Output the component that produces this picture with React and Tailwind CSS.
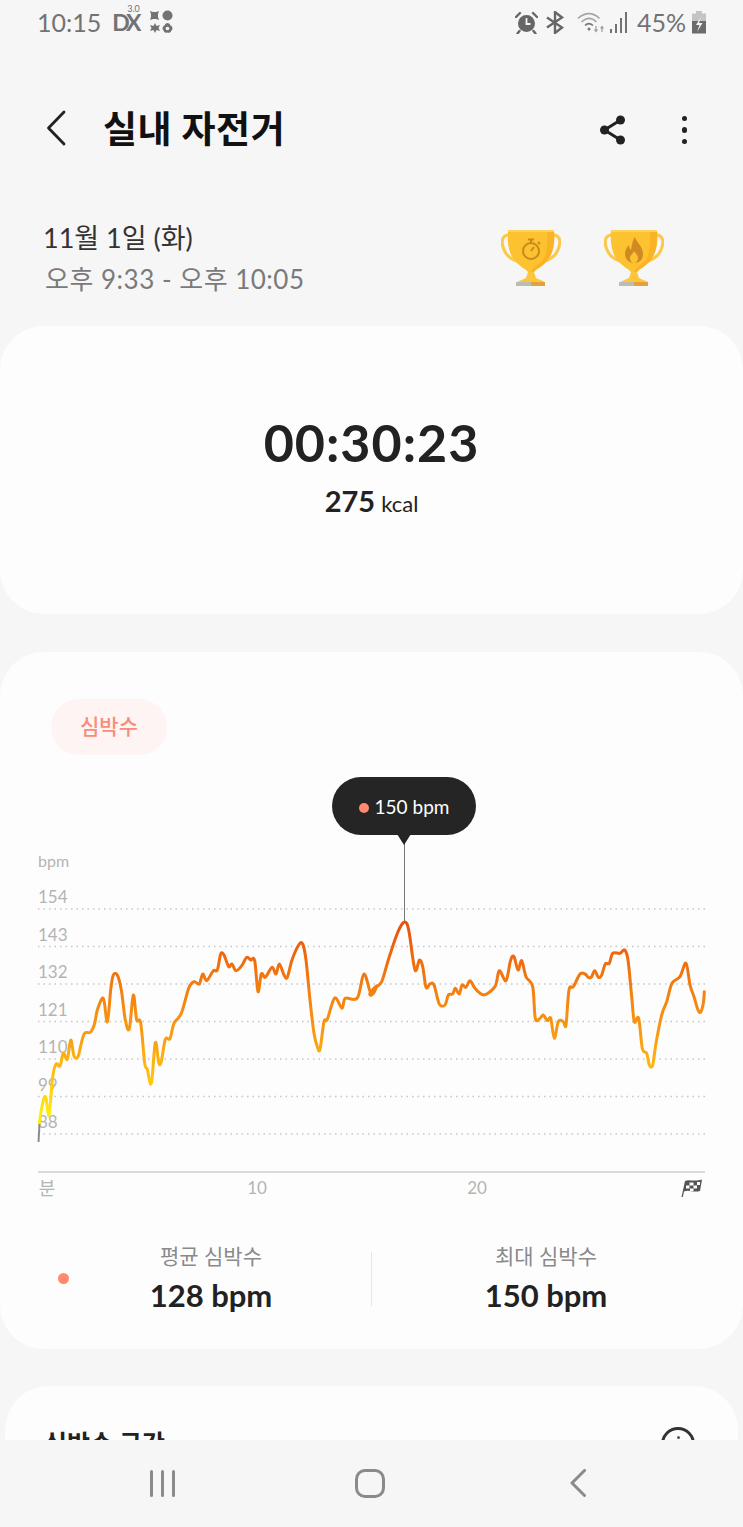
// traced from the chart, left half then right half
const LEFT_TRACE = [
  [118, 850], [124, 810], [132, 775], [138, 775], [146, 828], [152, 780], [158, 710], [168, 672], [180, 678], [190, 640],
  [202, 658], [212, 600], [222, 648], [234, 650], [244, 610], [254, 580], [272, 576], [284, 550], [292, 510], [310, 475],
  [322, 546], [332, 450], [340, 405], [352, 405], [364, 450], [376, 540], [388, 566], [400, 465], [410, 540], [422, 548],
  [434, 670], [442, 688], [454, 730], [466, 608], [476, 668], [484, 665], [496, 598], [510, 596], [522, 550], [544, 520],
  [566, 445], [582, 425], [598, 432], [608, 402], [620, 422], [640, 392], [652, 390], [662, 342], [672, 345], [686, 380],
  [696, 372], [708, 392], [726, 376], [740, 352], [752, 360], [764, 362], [774, 455], [784, 402], [796, 412], [816, 382],
  [828, 402], [838, 372], [852, 405], [862, 412], [876, 360], [896, 315], [908, 312], [918, 360], [930, 480], [942, 580],
  [952, 620], [960, 628], [972, 545], [982, 538], [1004, 474], [1026, 505], [1036, 475], [1072, 474], [1092, 402], [1114, 463],
  [1130, 437],
];
const RIGHT_TRACE = [
  [0, 670], [5, 675], [15, 655], [35, 635], [55, 570], [80, 495], [98, 460], [110, 460], [118, 490], [135, 600],
  [148, 570], [158, 590], [168, 652], [180, 642], [192, 645], [208, 702], [225, 705], [235, 675], [248, 672], [256, 655],
  [268, 672], [276, 645], [288, 652], [300, 632], [315, 655], [335, 673], [350, 672], [376, 648], [388, 602], [408, 632],
  [422, 570], [432, 560], [444, 600], [455, 572], [468, 620], [488, 650], [496, 745], [510, 745], [520, 735], [532, 752],
  [542, 745], [553, 805], [565, 755], [580, 755], [588, 765], [597, 660], [610, 650], [630, 612], [645, 612], [655, 622],
  [664, 622], [674, 602], [685, 622], [695, 615], [706, 582], [718, 580], [728, 550], [750, 550], [764, 540], [774, 570],
  [785, 680], [793, 755], [806, 745], [817, 835], [830, 850], [838, 885], [848, 885], [858, 820], [875, 735], [890, 695],
  [906, 640], [930, 620], [948, 580], [960, 645], [972, 680], [984, 720], [992, 726], [1000, 700], [1003, 665],
];
const POINTS = [
  ...LEFT_TRACE.map(([x, y]) => [x / 3, 840 + y / 3]),
  ...RIGHT_TRACE.map(([x, y]) => [370 + x / 3, 770 + y / 3]),
];

function smoothPath(pts) {
  let d = `M${pts[0][0]} ${pts[0][1]}`;
  for (let i = 0; i < pts.length - 1; i++) {
    const p0 = pts[i - 1] || pts[i];
    const p1 = pts[i];
    const p2 = pts[i + 1];
    const p3 = pts[i + 2] || p2;
    const c1x = p1[0] + (p2[0] - p0[0]) / 6;
    const c1y = p1[1] + (p2[1] - p0[1]) / 6;
    const c2x = p2[0] - (p3[0] - p1[0]) / 6;
    const c2y = p2[1] - (p3[1] - p1[1]) / 6;
    d += `C${c1x.toFixed(1)} ${c1y.toFixed(1)} ${c2x.toFixed(1)} ${c2y.toFixed(1)} ${p2[0].toFixed(1)} ${p2[1].toFixed(1)}`;
  }
  return d;
}

const GRID = [
  { y: 909, label: '154' },
  { y: 946.5, label: '143' },
  { y: 984, label: '132' },
  { y: 1021.5, label: '121' },
  { y: 1059, label: '110' },
  { y: 1096.5, label: '99' },
  { y: 1134, label: '88' },
];

function Trophy({ id, children }) {
  return (
    <svg width="60" height="58" viewBox="0 0 60 58">
      <path d="M9 6C2 5 0 11 2 18c2 7 7 12 14 14" fill="none" stroke="#fbc94a" strokeWidth="3" />
      <path d="M51 6c7-1 9 5 7 12-2 7-7 12-14 14" fill="none" stroke="#fbc94a" strokeWidth="3" />
      <path d="M7 1h46c1 14-1 24-7 31-5 6-11 8-13 11h-6c-2-3-8-5-13-11C8 25 6 15 7 1z" fill="#fcc22f" />
      <path d="M53 1c1 14-1 24-7 31-5 6-11 8-13 11h-3c1-4 7-7 12-12 4-6 5-18 4-30z" fill="#fbb325" />
      <path d="M7 1h46v2H7z" fill="#fdd25a" />
      <path d="M27 43h6l2 6 9 4H16l9-4z" fill="#fdc63a" />
      <rect x="15" y="53" width="15" height="4" fill="#b9bdb4" />
      <rect x="30" y="53" width="14" height="4" fill="#e2a13d" />
      <g id={id}>{children}</g>
    </svg>
  );
}

function Chart() {
  return (
    <svg width="743" height="445" viewBox="0 755 743 445" className="block">
      <defs>
        <linearGradient id="hr" gradientUnits="userSpaceOnUse" x1="0" y1="922" x2="0" y2="1112">
          <stop offset="0" stopColor="#e8520e" />
          <stop offset="0.3" stopColor="#f2780f" />
          <stop offset="0.6" stopColor="#f99c12" />
          <stop offset="0.85" stopColor="#ffc80f" />
          <stop offset="1" stopColor="#ffe90f" />
        </linearGradient>
      </defs>
      <text x="38" y="867" fontSize="16" fill="#b4b4b4">bpm</text>
      {GRID.map((g) => (
        <g key={g.label}>
          <text x="38" y={g.y - 6} fontSize="17" fill="#b4b4b4">{g.label}</text>
          <line x1="38" x2="705" y1={g.y} y2={g.y} stroke="#c6c6c6" strokeWidth="1.5" strokeDasharray="1.5 4" />
        </g>
      ))}
      <line x1="404.5" x2="404.5" y1="840" y2="922" stroke="#777777" strokeWidth="1" />
      <path d={smoothPath(POINTS)} fill="none" stroke="url(#hr)" strokeWidth="3" strokeLinejoin="round" strokeLinecap="round" />
      <path d="M38.5 1142L39.5 1124" fill="none" stroke="#8c8c8c" strokeWidth="2" />
      <line x1="38" x2="705" y1="1172" y2="1172" stroke="#dadada" strokeWidth="2" />
      <text x="47" y="1195" fontSize="18" fill="#b4b4b4" textAnchor="middle">분</text>
      <text x="257" y="1194" fontSize="17" fill="#b4b4b4" textAnchor="middle">10</text>
      <text x="477" y="1194" fontSize="17" fill="#b4b4b4" textAnchor="middle">20</text>
      <g transform="translate(681 1179)">
        <path d="M0.5 18L4 2C8 0 13 3 21 0.5L19 12C12 14 8 10 3 12.5L1.8 18z" fill="#555555" />
        <path d="M8.5 3.5h4v3h-4zM16 3h3v3h-3zM5 6.5h3.5v3H5zM12.5 6.5h3.5v3h-3.5zM9 9.5h3.5v2.5H9z" fill="#fdfdfd" />
      </g>
    </svg>
  );
}

function StatusBar() {
  return (
    <div className="flex h-[44px] items-center justify-between pl-[37px] pr-[36px] text-[#727272]">
      <div className="flex items-center">
        <span className="text-[25px] leading-none">10:15</span>
        <span className="relative ml-[11px] text-[23px] font-bold leading-none tracking-[-3px]">
          DX
          <span className="absolute left-[15px] top-[-7px] text-[9px] font-normal tracking-normal">3.0</span>
        </span>
        <svg className="ml-[10px]" width="25" height="24" viewBox="0 0 25 24" fill="#727272">
          <path d="M1 1l3 1 3 0 3-1-1 3v3l1 3-3-1H4l-3 1 1-3V4z" />
          <circle cx="18.5" cy="5.5" r="5" />
          <path d="M6 13l1.5 3L11 15l-1.5 3 1.5 3-3.500-1L6 23l-1.500-3L1 21l1.500-3L1 15l3.500 1z" />
          <path d="M18.500 13a3 3 0 0 1 3 2.500 3 3 0 0 1 1 5 3 3 0 0 1-4 2 3 3 0 0 1-4-2 3 3 0 0 1 1-5 3 3 0 0 1 3-2.500z" />
          <circle cx="18.5" cy="18.500" r="1.800" fill="#f6f6f6" />
        </svg>
      </div>
      <div className="flex items-center">
        <svg width="23" height="23" viewBox="0 0 23 23">
          <circle cx="11.500" cy="12.500" r="8.500" fill="#666666" />
          <path d="M11.500 7v6h4" fill="none" stroke="#f6f6f6" strokeWidth="1.800" />
          <path d="M1 6l4-4M22 6l-4-4M4.500 20l-2 2.500M18.500 20l2 2.500" stroke="#666666" strokeWidth="2.400" strokeLinecap="round" />
        </svg>
        <svg className="ml-[7px]" width="20" height="23" viewBox="0 0 20 23" fill="none" stroke="#666666" strokeWidth="2.400">
          <path d="M2 6.500l15 10-7 5.500V1l7 5.500-15 10" />
        </svg>
        <svg className="ml-[12px]" width="28" height="23" viewBox="0 0 28 23" fill="none" stroke="#a6a6a6" strokeWidth="1.600">
          <path d="M1 7.500C8 1 16 1 22.500 7.500M4.500 11c5-4.500 10.500-4.500 15 0" />
          <path d="M8 14.500c2.500-2.500 5-2.500 8 0" stroke="#777777" />
          <circle cx="12" cy="18" r="1.500" fill="#777777" stroke="none" />
          <path d="M19 15v5M17.500 18.500l1.500 2 1.500-2M25 21v-5M23.500 17.500l1.500-2 1.500 2" stroke="#9a9a9a" strokeWidth="1.200" />
        </svg>
        <div className="ml-[5px] flex h-[21px] items-end gap-[3px]">
          <div className="h-[4px] w-[2px] bg-[#727272]" />
          <div className="h-[9px] w-[2px] bg-[#727272]" />
          <div className="h-[15px] w-[2px] bg-[#727272]" />
          <div className="h-[21px] w-[2px] bg-[#727272]" />
        </div>
        <span className="ml-[10px] text-[25px] leading-none">45%</span>
        <svg className="ml-[5px]" width="16" height="23" viewBox="0 0 16 23">
          <path d="M5 0h6v2.500h4V10H1V2.500h4z" fill="#c4c4c4" />
          <rect x="1" y="10" width="14" height="12.500" fill="#6b6b6b" />
          <path d="M10 6l-5 8h3.500L6 21l5.500-9H8z" fill="#f6f6f6" />
        </svg>
      </div>
    </div>
  );
}

function Stat({ label, value }) {
  return (
    <div className="flex flex-col items-center">
      <span className="text-[21px] leading-[26px] text-[#8a8a8a]">{label}</span>
      <span className="mt-[7px] text-[31px] font-bold leading-[38px] text-[#222222]">{value}</span>
    </div>
  );
}

export default function App() {
  return (
    <div className="flex h-[1527px] w-[743px] flex-col overflow-hidden bg-[#f6f6f6] font-['Lato','Noto_Sans_CJK_KR',sans-serif]">
      <StatusBar />

      <main className="min-h-0 flex-1 overflow-hidden">
        <header className="mt-[50px] flex h-[68px] items-center">
          <svg className="ml-[46px]" width="20" height="36" viewBox="0 0 20 36" fill="none" stroke="#222222" strokeWidth="2.800" strokeLinecap="round" strokeLinejoin="round">
            <path d="M18 2L2.500 18 18 34" />
          </svg>
          <h1 className="ml-[37px] text-[37px] font-bold leading-none tracking-[0.5px] text-[#111111]">실내 자전거</h1>
          <svg className="ml-auto mt-[4px]" width="28" height="30" viewBox="0 0 28 30" fill="#222222">
            <circle cx="21.500" cy="5" r="4.500" />
            <circle cx="5.500" cy="15" r="4.500" />
            <circle cx="21.500" cy="25" r="4.500" />
            <path d="M21.500 5L5.500 15l16 10" fill="none" stroke="#222222" strokeWidth="3" />
          </svg>
          <div className="ml-[55px] mr-[56px] mt-[4px] flex flex-col gap-[6px]">
            <div className="size-[5.500px] rounded-full bg-[#222222]" />
            <div className="size-[5.500px] rounded-full bg-[#222222]" />
            <div className="size-[5.500px] rounded-full bg-[#222222]" />
          </div>
        </header>

        <section className="mt-[60px] flex h-[72px] items-center pl-[43px] pr-[79px]">
          <div className="flex-1">
            <p className="text-[27px] leading-[32px] text-[#333333]">11월 1일 (화)</p>
            <p className="ml-[2px] mt-[9px] text-[26px] leading-[32px] tracking-[0.5px] text-[#7a7a7a]">오후 9:33 - 오후 10:05</p>
          </div>
          <div className="flex gap-[43px]">
            <Trophy id="medal-time">
              <circle cx="30" cy="22" r="8" fill="none" stroke="#c98a1c" strokeWidth="2" />
              <path d="M27 10.500h6M30 11v3M37 13l2 2M30 22l3-4" fill="none" stroke="#c98a1c" strokeWidth="2" />
            </Trophy>
            <Trophy id="medal-fire">
              <path d="M31 8c1 5 8 9 8 17 0 6-4 9-9 9s-9-4-9-9c0-4 2-7 4-9 0 3 1 4 2 5 1-4 1-9 4-13z" fill="#d08a21" />
              <path d="M30 22c1 2 4 4 4 7s-2 5-4 5-4-2-4-5 3-4 4-7z" fill="#fcc22f" />
            </Trophy>
          </div>
        </section>

        <section className="mt-[32px] flex h-[288px] flex-col items-center rounded-[44px] bg-[#fdfdfd] pt-[84px]">
          <p className="text-[52px] font-bold leading-[64px] tracking-[1px] text-[#222222]">00:30:23</p>
          <p className="mt-[10px] leading-[34px] text-[#222222]">
            <span className="text-[29px] font-bold">275</span>
            <span className="ml-[6px] text-[22px]">kcal</span>
          </p>
        </section>

        <section className="mt-[38px] h-[697px] rounded-[44px] bg-[#fdfdfd] pt-[47px]">
          <div className="ml-[51px] flex h-[56px] w-[116px] items-center justify-center rounded-full bg-[#fdf4f3] pb-[3px] text-[21px] font-medium text-[#f98d7b]">
            심박수
          </div>
          <div className="relative">
            <Chart />
            <div className="absolute left-[332px] top-[22px] flex h-[58px] w-[144px] items-center justify-center gap-[6px] rounded-[29px] bg-[#252525] pt-[3px] text-[19px] text-white">
              <div className="size-[10px] rounded-full bg-[#ff8a70]" />
              150 bpm
              <div className="absolute bottom-[-10px] left-[65px] size-0 border-x-[7px] border-t-[11px] border-x-transparent border-t-[#252525]" />
            </div>
          </div>
          <div className="mt-[43px] flex items-center pl-[58px]">
            <div className="size-[11px] rounded-full bg-[#ff8a70]" />
            <div className="flex w-[284px] justify-center">
              <Stat label="평균 심박수" value="128 bpm" />
            </div>
            <div className="ml-[18px] h-[54px] w-px bg-[#e6e6e6]" />
            <div className="flex w-[348px] justify-center">
              <Stat label="최대 심박수" value="150 bpm" />
            </div>
          </div>
        </section>

        <section className="mx-[5px] mt-[37px] flex h-[200px] items-start justify-between rounded-[44px] bg-[#fdfdfd] pl-[39px] pr-[43px] pt-[41px]">
          <h2 className="mt-[4px] text-[25px] font-bold leading-none text-[#222222]">심박수 구간</h2>
          <div className="flex size-[34px] shrink-0 justify-center rounded-full border-[3px] border-[#333333] pt-[6px]">
            <div className="size-[3px] rounded-full bg-[#555555]" />
          </div>
        </section>
      </main>

      <nav className="flex h-[87px] shrink-0 items-center bg-[#f6f6f6] pb-[1px]">
        <div className="ml-[150px] flex h-[27px] gap-[8px]">
          <div className="w-[3px] rounded-full bg-[#8a8a8a]" />
          <div className="w-[3px] rounded-full bg-[#8a8a8a]" />
          <div className="w-[3px] rounded-full bg-[#8a8a8a]" />
        </div>
        <div className="ml-[180px] h-[29px] w-[30px] rounded-[10px] border-[3px] border-[#8a8a8a]" />
        <svg className="ml-[185px]" width="16" height="28" viewBox="0 0 16 28" fill="none" stroke="#8a8a8a" strokeWidth="3" strokeLinecap="round" strokeLinejoin="round">
          <path d="M14.500 1.500L2 14l12.500 12.500" />
        </svg>
      </nav>
    </div>
  );
}
